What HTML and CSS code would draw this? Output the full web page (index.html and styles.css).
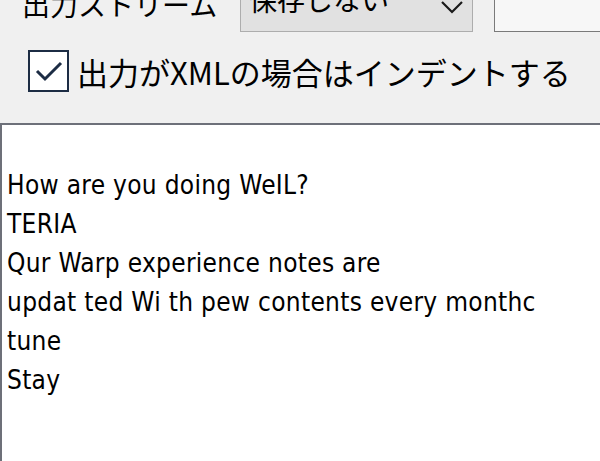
FILE: index.html
```html
<!DOCTYPE html>
<html>
	<head>
		<meta charset="utf-8">
		<title>出力設定</title>
		<link rel="stylesheet" href="styles.css">
	</head>
	<body>
		<div class="options">
			<div class="stream-row">
				<span class="stream-label">出力ストリーム</span>
				<div class="select">
					<span class="select-value">保存しない</span>
					<svg class="chevron" width="24" height="14" viewBox="0 0 24 14">
						<path d="M2 2 L12 12 L22 2" fill="none" stroke="#1a1a1a" stroke-width="2.2"/>
					</svg>
				</div>
				<div class="textbox"></div>
			</div>
			<label class="indent-check">
				<span class="checkbox">
					<svg width="32" height="30" viewBox="0 0 32 30">
						<path d="M4 15 L12 23 L28 7" fill="none" stroke="#1c2c44" stroke-width="3"/>
					</svg>
				</span>
				<span class="check-text">出力がXMLの場合はインデントする</span>
			</label>
		</div>
		<div class="output">
			<div class="output-text">
				<div class="line">&nbsp;</div>
				<div class="line">How are you doing WeIL?</div>
				<div class="line">TERIA</div>
				<div class="line">Qur Warp experience notes are</div>
				<div class="line">updat ted Wi th pew contents every monthc</div>
				<div class="line">tune</div>
				<div class="line">Stay</div>
			</div>
		</div>
	</body>
</html>
```

FILE: styles.css
```css
* {
	box-sizing: border-box;
}
html,body {
	width: 100%;
	height: 100%;
}
body {
	margin: 0;
	background-color: #f0f0f0;
	overflow: hidden;
	font-family: "Noto Sans CJK JP", "DejaVu Sans", sans-serif;
}
.options {
	height: 123px;
	overflow: hidden;
}
.stream-row {
	display: flex;
	align-items: flex-end;
	height: 32px;
}
.stream-label {
	font-size: 28px;
	line-height: 1;
	padding-left: 22px;
	width: 240px;
	margin-bottom: 14px;
	color: #000;
}
.select {
	width: 233px;
	height: 60px;
	align-self: flex-end;
	display: flex;
	align-items: flex-end;
	justify-content: space-between;
	background-color: #e1e1e1;
	border: 1px solid #adadad;
	border-top: none;
	padding: 0 8px 17px 8px;
}
.select-value {
	font-size: 28px;
	line-height: 1;
	color: #000;
	margin-bottom: 1px;
}
.chevron {
	margin-bottom: 0;
}
.textbox {
	margin-left: 21px;
	flex: 1;
	height: 60px;
	background-color: #f7f7f7;
	border: 1px solid #7a7a7a;
	border-top: none;
	border-right: none;
}
.indent-check {
	display: flex;
	align-items: center;
	margin-top: 18px;
	padding-left: 28px;
}
.checkbox {
	width: 41px;
	height: 42px;
	border: 2px solid #1c2c44;
	background-color: #fff;
	display: flex;
	align-items: center;
	justify-content: center;
}
.check-text {
	font-size: 31px;
	line-height: 1;
	margin-left: 8px;
	color: #000;
}
.output {
	height: 338px;
	background-color: #fff;
	border-top: 2px solid #6d7079;
	border-left: 2px solid #6d7079;
	padding: 2px 0 0 5px;
}
.output-text {
	font-family: "DejaVu Sans Condensed", "DejaVu Sans", sans-serif;
	font-size: 26px;
	letter-spacing: 0.3px;
	color: #000;
}
.line {
	height: 39px;
	line-height: 39px;
	white-space: pre;
}
```
